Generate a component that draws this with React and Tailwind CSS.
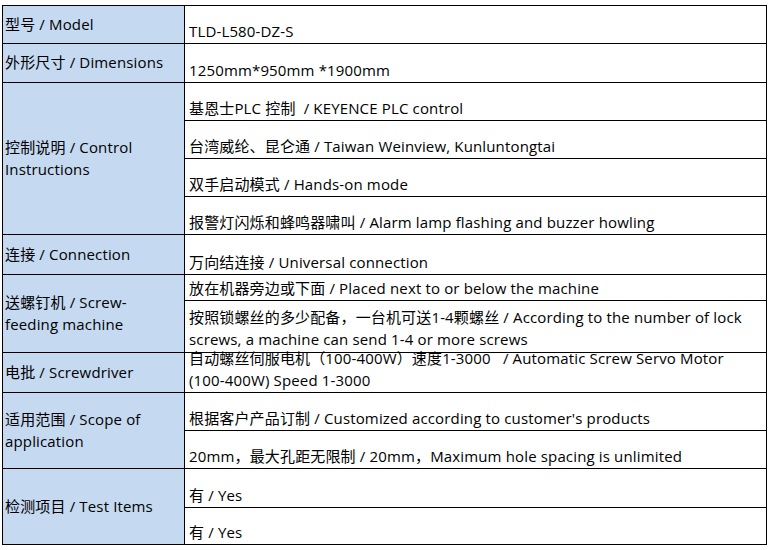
import React from "react";

const font = { fontFamily: '"Open Sans", "Noto Sans CJK SC", sans-serif' };

function Sub({ h, first, pb = "pb-[1px]", children }) {
  return (
    <div
      className={`flex flex-col justify-end pl-[4px] whitespace-pre leading-[22px] ${pb} ${first ? "" : "border-t border-black"} ${h}`}
    >
      <div>{children}</div>
    </div>
  );
}

function Group({ label, first, children }) {
  return (
    <div className={`flex ${first ? "" : "border-t border-black"}`}>
      <div className="w-[182px] shrink-0 bg-[#c5d9f1] border-r border-black flex items-center pl-[2px] pb-[2px] leading-[22px] whitespace-pre">
        <div>{label}</div>
      </div>
      <div className="flex-1 flex flex-col">{children}</div>
    </div>
  );
}

export default function App() {
  return (
    <div className="w-[773px] h-[550px] bg-white pt-[5px] pl-[2px] text-[15px] tracking-[0.15px] text-black" style={font}>
      <div className="w-[765px] border border-black">
        <Group label="型号 / Model" first>
          <Sub h="h-[37px]" first>TLD-L580-DZ-S</Sub>
        </Group>
        <Group label="外形尺寸 / Dimensions">
          <Sub h="h-[38px]" first>1250mm*950mm *1900mm</Sub>
        </Group>
        <Group label={<>控制说明 / Control<br />Instructions</>}>
          <Sub h="h-[37px]" first>基恩士PLC 控制  / KEYENCE PLC control</Sub>
          <Sub h="h-[38px]">台湾威纶、昆仑通 / Taiwan Weinview, Kunluntongtai</Sub>
          <Sub h="h-[38px]">双手启动模式 / Hands-on mode</Sub>
          <Sub h="h-[38px]">报警灯闪烁和蜂鸣器啸叫 / Alarm lamp flashing and buzzer howling</Sub>
        </Group>
        <Group label="连接 / Connection">
          <Sub h="h-[39px]" first>万向结连接 / Universal connection</Sub>
        </Group>
        <Group label={<>送螺钉机 / Screw-<br />feeding machine</>}>
          <Sub h="h-[25px]" first>放在机器旁边或下面 / Placed next to or below the machine</Sub>
          <Sub h="h-[52px]" pb="pb-[2px]">
            按照锁螺丝的多少配备，一台机可送1-4颗螺丝 / According to the number of lock<br />screws, a machine can send 1-4 or more screws
          </Sub>
        </Group>
        <Group label="电批 / Screwdriver">
          <div className="h-[39px] flex flex-col justify-end gap-[6px] pl-[4px] pb-[4px] whitespace-pre leading-[16px]">
            <div>自动螺丝伺服电机（100-400W）速度1-3000   / Automatic Screw Servo Motor</div>
            <div>(100-400W) Speed 1-3000</div>
          </div>
        </Group>
        <Group label={<>适用范围 / Scope of<br />application</>}>
          <Sub h="h-[37px]" first>根据客户产品订制 / Customized according to customer's products</Sub>
          <Sub h="h-[38px]">20mm，最大孔距无限制 / 20mm，Maximum hole spacing is unlimited</Sub>
        </Group>
        <Group label="检测项目 / Test Items">
          <Sub h="h-[38px]" first>有 / Yes</Sub>
          <Sub h="h-[37px]">有 / Yes</Sub>
        </Group>
      </div>
    </div>
  );
}
